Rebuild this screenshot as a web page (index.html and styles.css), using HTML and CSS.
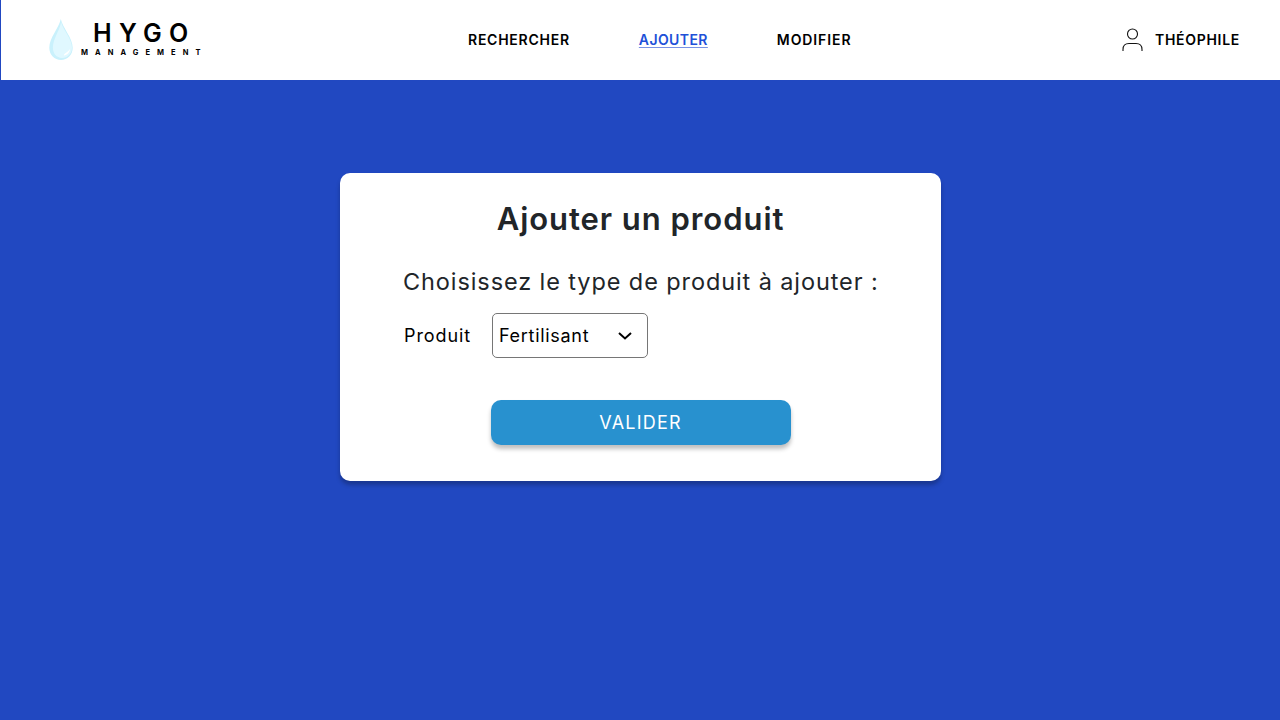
FILE: index.html
```html
<!DOCTYPE html>
<html lang="fr">
<head>
<meta charset="utf-8">
<title>Hygo Management</title>
<link rel="stylesheet" href="styles.css">
</head>
<body>
<header class="header">
  <a class="logo">
    <svg class="drop" width="25" height="42" viewBox="0 0 25 42">
      <path fill="#c9f1fc" d="M12.8 0C14.500 8.500 24.7 19 24.7 28.8C24.7 36 19.500 41 13 41S1.300 36 1.300 28.8C1.300 19 11.100 8.500 12.8 0Z"/>
      <path fill="#e0f8ff" d="M13.100 3C15 11 24 20 24 28.6C24 35 19.500 39 14 39S4.900 34.500 4.900 28.6C4.900 20 12 11 13.100 3Z"/>
      <path fill="#fff" d="M22 30C21.800 33.500 19 36 16 36.500C15 35 20.500 33 22 30Z"/>
    </svg>
    <span class="brand">
      <span class="brand-name">HYGO</span>
      <span class="brand-sub">MANAGEMENT</span>
    </span>
  </a>
  <nav class="nav">
    <a class="nav-link search">RECHERCHER</a>
    <a class="nav-link active">AJOUTER</a>
    <a class="nav-link edit">MODIFIER</a>
  </nav>
  <a class="user">
    <svg width="22" height="24" viewBox="0 0 22 24" fill="none" stroke="#111" stroke-width="1.100">
      <circle cx="10.500" cy="6" r="5"/>
      <path d="M1 23V21.500Q1 15.500 7 15.500H14Q20 15.500 20 21.500V23"/>
    </svg>
    <span class="user-name">THÉOPHILE</span>
  </a>
</header>
<main class="main">
  <section class="card">
    <h1 class="title">Ajouter un produit</h1>
    <h2 class="subtitle">Choisissez le type de produit à ajouter :</h2>
    <div class="field">
      <span class="label">Produit</span>
      <div class="select">
        <span class="select-value">Fertilisant</span>
        <svg width="14" height="8" viewBox="0 0 14 8" fill="none" stroke="#000" stroke-width="2"><path d="M1 1L7 6.500L13 1"/></svg>
      </div>
    </div>
    <button class="submit">VALIDER</button>
  </section>
</main>
</body>
</html>
```
FILE: styles.css
```css
* { box-sizing: border-box; }
body { margin: 0; height: 720px; overflow: hidden; background: #2148c1; font-family: Inter, "Open Sans", sans-serif; color: #000; }
.header { display: flex; align-items: center; height: 80px; margin-left: 1px; background: #fff; }
.logo { display: flex; width: 467px; padding-left: 47px; gap: 8px; }
.brand { display: flex; flex-direction: column; padding-top: 1px; }
.brand-name { padding-left: 12px; font-size: 25px; line-height: 26px; font-weight: 600; letter-spacing: 7.300px; }
.brand-sub { font-size: 7.5px; line-height: 10px; margin-top: 2px; font-weight: 700; letter-spacing: 7.050px; }
.nav { display: flex; width: 654px; gap: 69px; }
.nav-link, .user-name { font-size: 14px; line-height: 20px; font-weight: 600; letter-spacing: 0.7px; white-space: nowrap; }
.nav-link.search { letter-spacing: 0.75px; }
.nav-link.active { color: #2050d8; letter-spacing: 0.4px; text-decoration: underline; text-decoration-color: #7893e5; text-decoration-thickness: 1px; text-underline-offset: 2px; }
.nav-link.edit { letter-spacing: 0.9px; }
.user { display: flex; align-items: center; gap: 11px; }
.main { display: flex; justify-content: center; padding: 93px 0 0 1px; }
.card { display: flex; flex-direction: column; align-items: center; width: 601px; height: 308px; padding-top: 27px; border-radius: 10px; background: #fff; box-shadow: 0 4px 4px rgba(0,0,0,.25); }
.title { margin: 0; font-size: 31px; line-height: 38px; font-weight: 600; letter-spacing: 0.95px; color: #212529; white-space: nowrap; }
.subtitle { align-self: flex-start; margin: 29px 0 0 63px; font-size: 23.5px; line-height: 30px; font-weight: 400; letter-spacing: 0.9px; color: #212529; white-space: nowrap; }
.field { display: flex; align-self: flex-start; align-items: center; margin: 16px 0 0 64px; }
.label { width: 88px; font-size: 18px; letter-spacing: 0.9px; white-space: nowrap; }
.select { display: flex; align-items: center; justify-content: space-between; width: 156px; height: 45px; padding: 0 15px 0 6px; border: 1px solid #767676; border-radius: 5px; font-size: 18px; letter-spacing: 0.7px; }
.submit { width: 300px; height: 45px; margin-top: 42px; padding: 0; border: 0; border-radius: 10px; background: #2891cf; color: #fff; font: 400 18px Inter, sans-serif; letter-spacing: 1.200px; box-shadow: 0 4px 4px rgba(0,0,0,.25); }
```
